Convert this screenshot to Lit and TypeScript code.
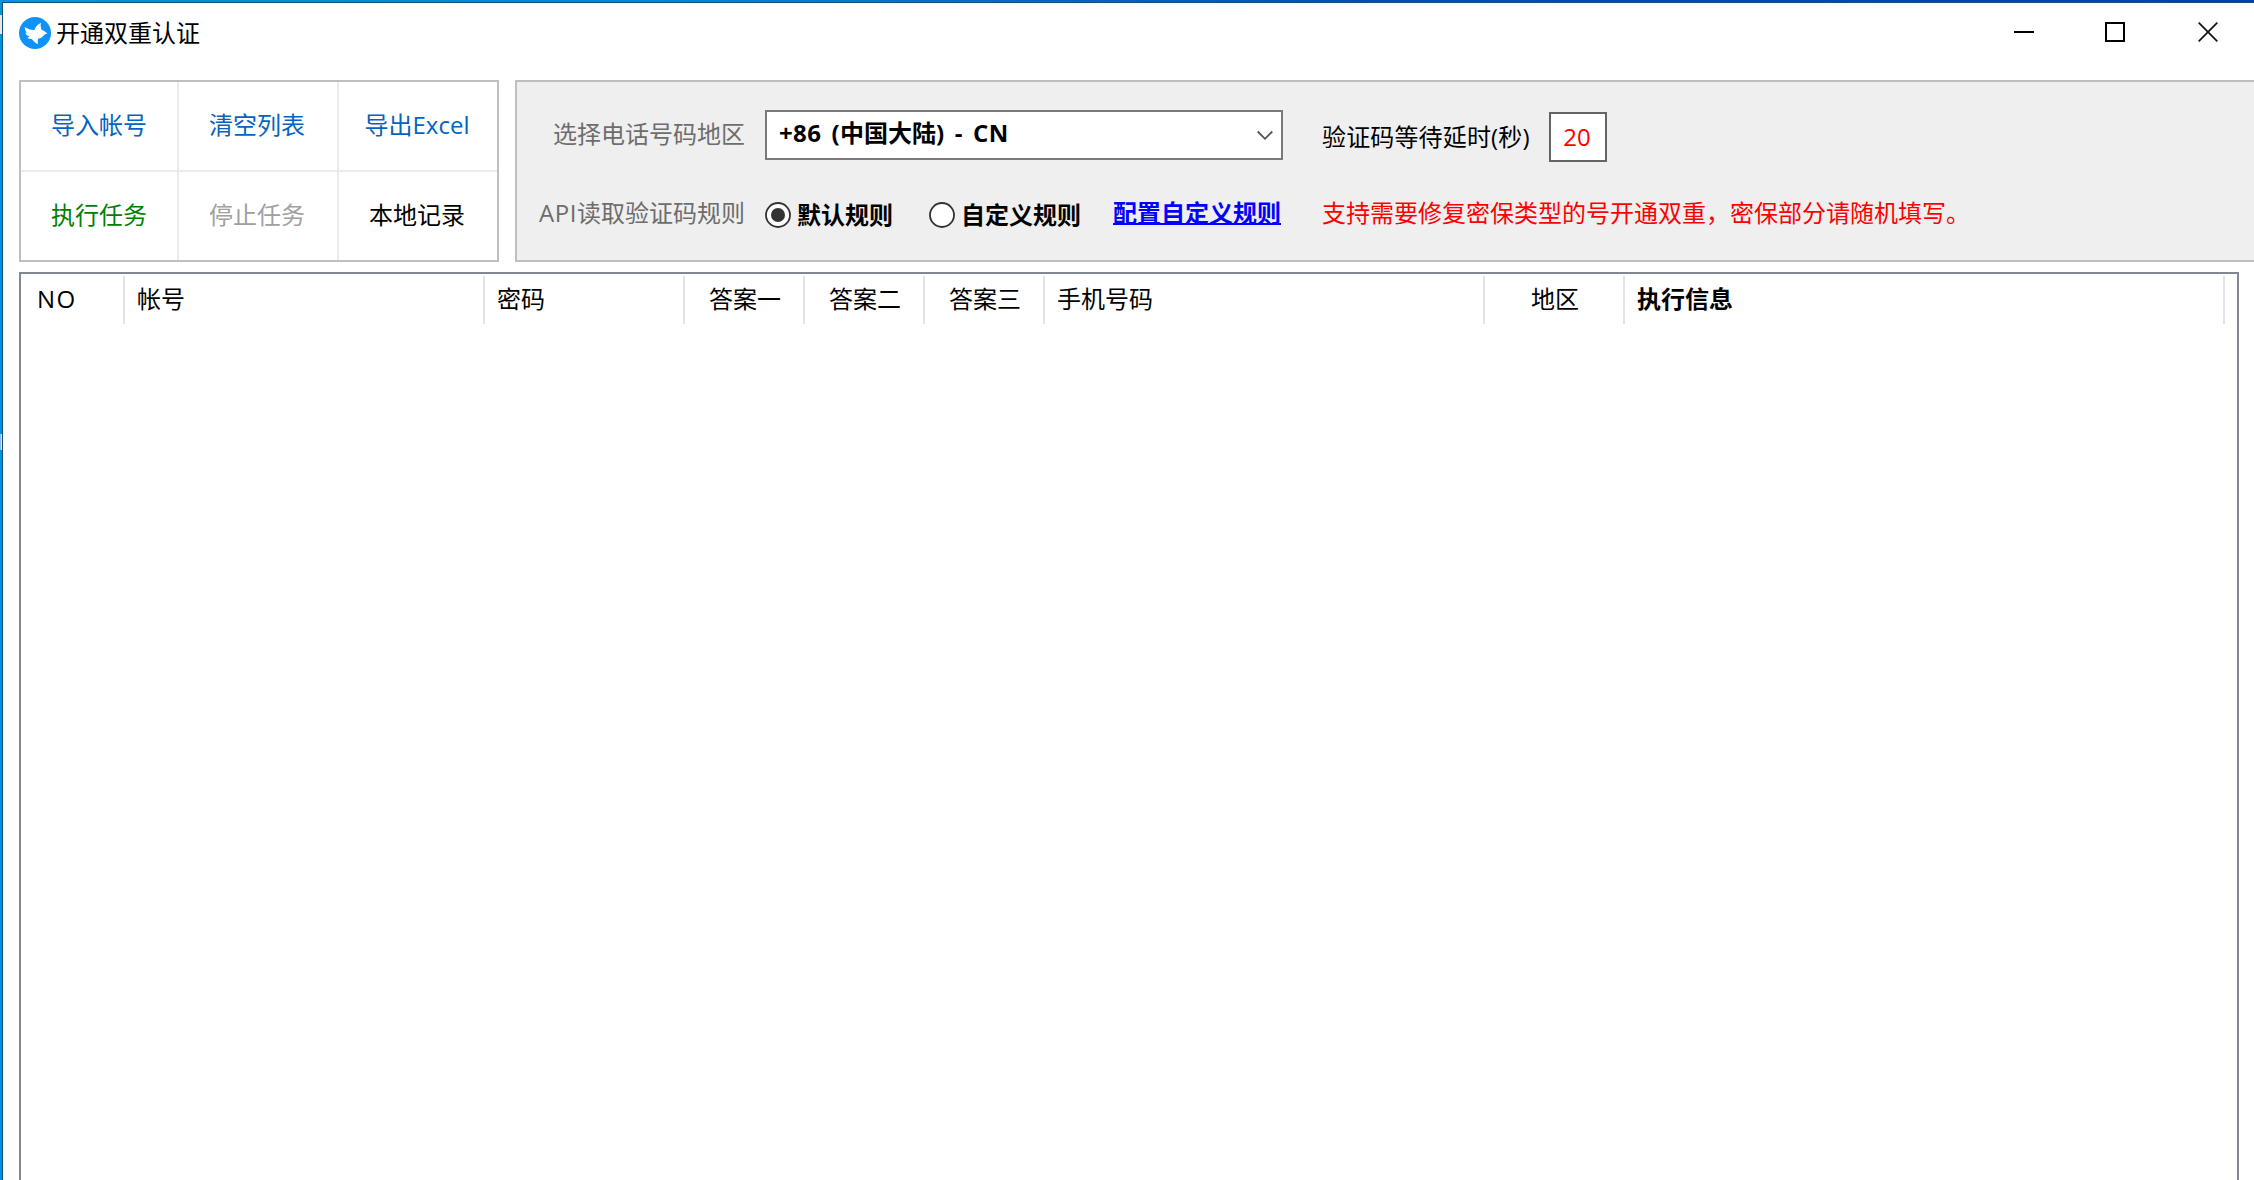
import { LitElement, html, svg, css } from "lit";
import { customElement, state } from "lit/decorators.js";
import { classMap } from "lit/directives/class-map.js";
import { styleMap } from "lit/directives/style-map.js";

interface Action {
  label: string;
  tone: string;
}

interface Column {
  label: string;
  width: number;
  align: string;
  bold?: boolean;
}

const ACTIONS: Action[] = [
  { label: "导入帐号", tone: "blue" },
  { label: "清空列表", tone: "blue" },
  { label: "导出Excel", tone: "blue" },
  { label: "执行任务", tone: "green" },
  { label: "停止任务", tone: "disabled" },
  { label: "本地记录", tone: "plain" },
];

const COLUMNS: Column[] = [
  { label: "NO", width: 104, align: "first" },
  { label: "帐号", width: 360, align: "start" },
  { label: "密码", width: 200, align: "start" },
  { label: "答案一", width: 120, align: "center" },
  { label: "答案二", width: 120, align: "center" },
  { label: "答案三", width: 120, align: "center" },
  { label: "手机号码", width: 440, align: "start" },
  { label: "地区", width: 140, align: "center" },
  { label: "执行信息", width: 600, align: "start", bold: true },
];

@customElement("app-root")
export class AppRoot extends LitElement {
  @state() private rule = "default";

  static styles = css`
    :host {
      display: block;
      box-sizing: border-box;
      width: 100%;
      height: 100vh;
      overflow: hidden;
      padding: 2px 0 0 2px;
      background:
        linear-gradient(#e6e6e6, #e6e6e6) 0 15px / 2px 19px no-repeat,
        linear-gradient(90deg, #8ab8f0 50%, #e6e0e0 50%) 0 434px / 2px 16px no-repeat,
        linear-gradient(90deg, #0094dc 0, #0086d8 30%, #0050b8 60%, #0040b0 100%);
      font-family: "Open Sans", "Noto Sans CJK SC", sans-serif;
      font-size: 24px;
      line-height: 32px;
      color: #000;
    }
    * {
      box-sizing: border-box;
    }
    .window {
      display: flex;
      flex-direction: column;
      height: 100%;
      border: solid #14507c;
      border-width: 1px 0 0 1px;
      background: #fff;
    }
    .titlebar {
      display: flex;
      align-items: flex-start;
      height: 77px;
      padding: 14px 36px 0 16px;
      flex: none;
    }
    .logo {
      display: block;
      width: 32px;
      height: 32px;
    }
    .title {
      margin: 0 auto 0 5px;
    }
    .controls {
      display: flex;
      gap: 71px;
      padding-top: 5px;
    }
    .controls svg {
      display: block;
      width: 20px;
      height: 20px;
    }
    .controls svg:last-child {
      margin-left: 2px;
    }
    .toolbar {
      display: flex;
      gap: 16px;
      height: 182px;
      padding-left: 16px;
      flex: none;
    }
    .actions {
      display: grid;
      grid-template: 88px 88px / 156px 158px 158px;
      gap: 2px;
      width: 480px;
      flex: none;
      border: 2px solid #bfbfbf;
      background: #ebebeb;
    }
    .actions button {
      border: 0;
      margin: 0;
      padding: 0 2px 2px 0;
      background: #fff;
      font: inherit;
      color: inherit;
      white-space: nowrap;
    }
    .actions button:nth-child(3n + 1) {
      padding-right: 0;
    }
    .actions .blue {
      color: #0563c1;
    }
    .actions .green {
      color: #008000;
    }
    .actions .disabled {
      color: #a0a0a0;
    }
    .settings {
      flex: 1;
      display: grid;
      grid-template-columns: 228px 518px 1fr;
      grid-template-rows: 50px 38px;
      column-gap: 20px;
      row-gap: 31px;
      padding-top: 28px;
      border: solid #bfbfbf;
      border-width: 2px 0 2px 2px;
      background: #efefef;
      white-space: nowrap;
    }
    .label {
      text-align: right;
      color: #6d6d6d;
    }
    .label.region {
      padding-top: 8px;
    }
    .label.api {
      padding-top: 6px;
    }
    .label .latin {
      letter-spacing: 0.6px;
    }
    .combo {
      display: flex;
      justify-content: space-between;
      align-items: flex-start;
      height: 50px;
      padding: 5px 8px 0 12px;
      border: 2px solid #7a7a7a;
      background: #fff;
      font-weight: 700;
    }
    .combo .latin {
      letter-spacing: 0.35px;
      word-spacing: 3.7px;
    }
    .combo svg {
      width: 16px;
      height: 11px;
      margin-top: 13px;
    }
    .delay {
      display: flex;
      padding-left: 19px;
      height: 52px;
    }
    .delay .caption {
      padding-top: 11px;
      width: 227px;
      letter-spacing: 0.15px;
    }
    .delay .value {
      width: 58px;
      height: 50px;
      margin-top: 2px;
      padding: 7px 2px 0 0;
      border: 2px solid #646464;
      background: #fff;
      color: #f00;
      text-align: center;
    }
    .rules {
      display: flex;
      padding-top: 7px;
      font-weight: 700;
    }
    .radio {
      display: flex;
      gap: 6px;
    }
    .radio span {
      padding-top: 1px;
    }
    .radio svg {
      width: 26px;
      height: 26px;
      margin-top: 4px;
      flex: none;
    }
    .radio + .radio {
      margin-left: 36px;
    }
    .link {
      margin: -1px 0 0 auto;
      height: 28px;
      padding-right: 2px;
      color: #00f;
      text-decoration: none;
    }
    .link span {
      display: block;
      height: 28px;
      border-bottom: 2px solid #00f;
    }
    .notice {
      padding: 6px 0 0 19px;
      color: #f00;
    }
    .list {
      flex: 1;
      margin: 10px 15px 0 16px;
      border: 2px solid #828790;
      border-bottom: 0;
      background: #fff;
    }
    .header {
      display: flex;
      height: 50px;
      padding-top: 2px;
    }
    .col {
      height: 48px;
      padding-top: 7px;
      border-right: 2px solid #e3e3e3;
      flex: none;
      white-space: nowrap;
    }
    .col.first {
      padding-left: 16px;
      letter-spacing: 1.5px;
    }
    .col.start {
      padding-left: 12px;
    }
    .col.center {
      padding-left: 2px;
      text-align: center;
    }
    .col.bold {
      font-weight: 700;
    }
  `;

  private renderRadio(id: string, label: string) {
    return html`
      <label class="radio" @click=${() => (this.rule = id)}>
        <svg viewBox="0 0 26 26">
          <circle cx="13" cy="13" r="12" fill="#fff" stroke="#333" stroke-width="1.8" />
          ${this.rule === id ? svg`<circle cx="13" cy="13" r="7" fill="#333" />` : null}
        </svg>
        <span>${label}</span>
      </label>
    `;
  }

  render() {
    return html`
      <div class="window">
        <div class="titlebar">
          <svg class="logo" viewBox="0 0 32 32">
            <circle cx="16" cy="16" r="16" fill="#0f93fb" />
            <path
              fill="#fff"
              d="M5.800 10 C9 12.200 12.500 13.300 15.500 13 C16.500 10 18.500 7.500 22 5.800 C21.300 8.800 21.800 11 22.800 13 C25 13.500 27 15 28.300 17 C26.500 16.800 25.500 17.300 24.500 18.800 C23.300 20.500 21.500 21.300 19.300 21.600 C18.600 23.500 18.600 25 19 27.200 C16.500 26 14.300 24.300 12.800 22 C11 22 9.500 21.700 8.300 21 L10.500 19.500 C8 18.800 6.800 17.500 6.500 15.800 L7.800 15.500 C6.300 14 5.700 12 5.800 10 Z"
            />
          </svg>
          <div class="title">开通双重认证</div>
          <div class="controls">
            <svg viewBox="0 0 20 20"><path d="M0 10H20" stroke="#000" stroke-width="2" /></svg>
            <svg viewBox="0 0 20 20">
              <rect x="1" y="1" width="18" height="18" fill="none" stroke="#000" stroke-width="2" />
            </svg>
            <svg viewBox="0 0 20 20">
              <path d="M.7 .7L19.300 19.300M19.300 .7L.7 19.300" stroke="#111" stroke-width="1.700" />
            </svg>
          </div>
        </div>

        <div class="toolbar">
          <div class="actions">
            ${ACTIONS.map((a) => html`<button class=${a.tone}>${a.label}</button>`)}
          </div>
          <div class="settings">
            <div class="label region">选择电话号码地区</div>
            <div class="combo">
              <span><span class="latin">+86 (</span>中国大陆<span class="latin">) - CN</span></span>
              <svg viewBox="0 0 16 11">
                <path d="M.7 1.500L8 8.800L15.300 1.500" fill="none" stroke="#555" stroke-width="1.800" />
              </svg>
            </div>
            <div class="delay">
              <span class="caption">验证码等待延时(秒)</span>
              <span class="value">20</span>
            </div>
            <div class="label api"><span class="latin">API</span>读取验证码规则</div>
            <div class="rules">
              ${this.renderRadio("default", "默认规则")}
              ${this.renderRadio("custom", "自定义规则")}
              <a class="link"><span>配置自定义规则</span></a>
            </div>
            <div class="notice">支持需要修复密保类型的号开通双重，密保部分请随机填写。</div>
          </div>
        </div>

        <div class="list">
          <div class="header">
            ${COLUMNS.map(
              (c) => html`<div
                class=${classMap({ col: true, [c.align]: true, bold: !!c.bold })}
                style=${styleMap({ width: `${c.width}px` })}
              >
                ${c.label}
              </div>`
            )}
          </div>
        </div>
      </div>
    `;
  }
}
